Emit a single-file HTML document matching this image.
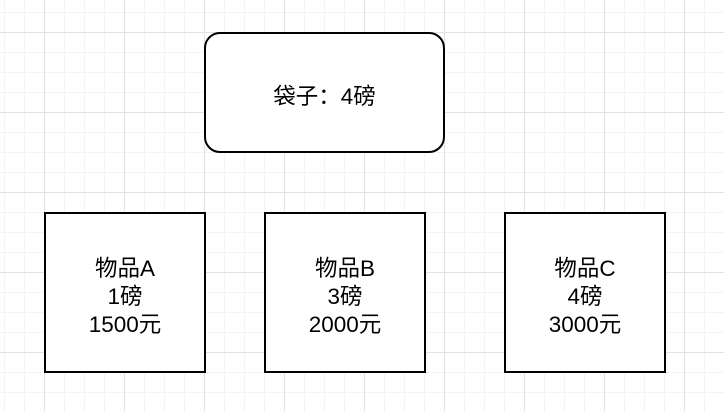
<!DOCTYPE html>
<html><head><meta charset="utf-8"><style>
html,body{margin:0;padding:0}
body{width:724px;height:412px;position:relative;overflow:hidden;background-color:#fff;
background-image:
linear-gradient(to right,#e2e2e2 1px,transparent 1px),
linear-gradient(to bottom,#e2e2e2 1px,transparent 1px),
linear-gradient(to right,#f4f4f4 1px,transparent 1px),
linear-gradient(to bottom,#f4f4f4 1px,transparent 1px);
background-size:80px 80px,80px 80px,20px 20px,20px 20px;
background-position:44px 32px,44px 32px,4px 12px,4px 12px;
font-family:"Liberation Sans","Noto Sans CJK SC",sans-serif;color:#000}
.b{position:absolute;box-sizing:border-box;border:2px solid #000;background:#fff;display:flex;align-items:center;justify-content:center;text-align:center;font-size:22.5px;line-height:28px;padding-top:8px}
</style></head><body>
<div class="b" style="left:204px;top:32px;width:241px;height:121px;border-radius:16px">袋子：4磅</div>
<div class="b" style="left:44px;top:212px;width:162px;height:161px">物品A<br>1磅<br>1500元</div>
<div class="b" style="left:264px;top:212px;width:162px;height:161px">物品B<br>3磅<br>2000元</div>
<div class="b" style="left:504px;top:212px;width:162px;height:161px">物品C<br>4磅<br>3000元</div>
</body></html>
